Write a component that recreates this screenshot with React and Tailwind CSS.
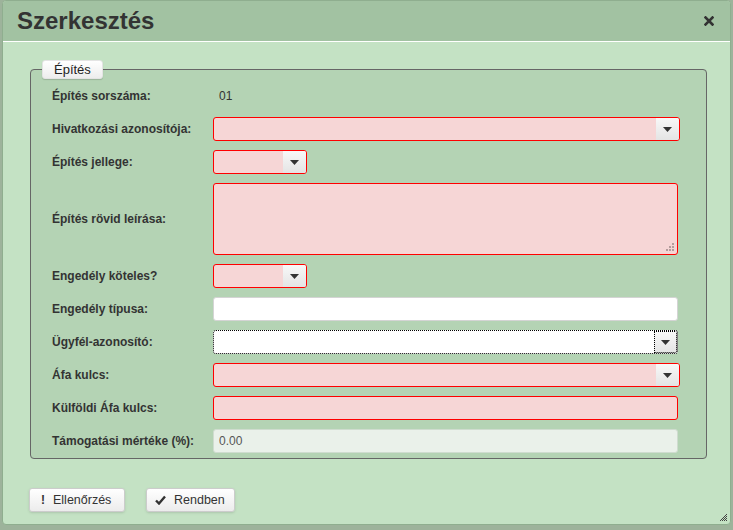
import React from "react";

const font = { fontFamily: '"Liberation Sans", Arial, sans-serif' };

const Arrow = () => (
  <svg width="9" height="5" viewBox="0 0 9 5" className="block">
    <path d="M0 0H9L4.5 5Z" fill="#333" />
  </svg>
);

const DropBtn = ({ dotted }) => (
  <span
    className={`flex h-full w-[23px] items-center justify-center rounded-r-[2px] bg-gradient-to-b from-[#f8f8f8] to-[#e4e4e4] ${dotted ? "outline outline-1 outline-dotted outline-black -outline-offset-1" : ""}`}
  >
    <Arrow />
  </span>
);

const Select = ({ w, tone }) => {
  const cls =
    tone === "error"
      ? "border-[#ff0000] bg-[#f6d6d6]"
      : "border-dotted border-black bg-white";
  return (
    <div className={`flex h-[24px] ${w} rounded-[3px] border ${cls}`}>
      <span className="flex-1" />
      <DropBtn dotted={tone !== "error"} />
    </div>
  );
};

const Input = ({ tone, value }) => {
  const cls =
    tone === "error"
      ? "border-[#ff0000] bg-[#f6d6d6]"
      : tone === "readonly"
      ? "border-[#cfdccf] bg-[#eaf1ea] text-[#555]"
      : "border-[#d4d4d4] bg-white";
  return (
    <div className={`flex h-[24px] w-[465px] items-center rounded-[3px] border px-[5px] text-[12px] ${cls}`}>
      {value}
    </div>
  );
};

const Row = ({ label, children, tall }) => (
  <div className={`flex items-center ${tall ? "h-[72px]" : "h-[24px]"}`}>
    <span className="w-[161px] shrink-0 text-[12px] font-bold text-[#333]">{label}</span>
    {children}
  </div>
);

const Grip = ({ color = "#b49c9c" }) => (
  <svg width="10" height="10" viewBox="0 0 10 10">
    {[
      [8, 2],
      [5, 5], [8, 5],
      [2, 8], [5, 8], [8, 8],
    ].map(([x, y], i) => (
      <rect key={i} x={x - 1} y={y - 1} width="2" height="2" fill={color} />
    ))}
  </svg>
);

export default function App() {
  return (
    <div className="h-[530px] w-[733px] overflow-hidden bg-[#9db39b]" style={font}>
      <div className="ml-[2px] flex h-[525px] w-[729px] flex-col overflow-hidden rounded-[4px] border border-[#8fae8f] bg-[#c4e2c4]">
        <div className="flex h-[41px] shrink-0 items-center justify-between border-b border-white bg-[#a2c2a2] pl-[14px] pr-[16px]">
          <h1 className="text-[24px] font-bold leading-none text-[#333]">Szerkesztés</h1>
          <svg width="10" height="10" viewBox="0 0 10 10">
            <path d="M1.5 1.5L8.5 8.5M8.5 1.5L1.5 8.5" stroke="#333" strokeWidth="2.6" strokeLinecap="square" />
          </svg>
        </div>

        <div className="flex flex-1 flex-col px-[27px] pt-[18px]">
          <fieldset className="w-[677px] rounded-[4px] border border-[#666] bg-[#b4d3b4] pb-[5px] pl-[11px] pr-[10px]">
            <legend className="h-[19px] rounded-[3px] border border-[#e4e4e4] bg-gradient-to-b from-white to-[#ededed] px-[11px] text-[13px] leading-[17px] text-[#222] shadow-[0_1px_1px_rgba(0,0,0,0.15)]">
              Építés
            </legend>
            <div className="flex flex-col gap-[9px] pl-[10px] pt-[5px]">
              <Row label="Építés sorszáma:">
                <span className="pl-[6px] text-[12px] text-[#333]">01</span>
              </Row>
              <Row label="Hivatkozási azonosítója:">
                <Select w="w-[467px]" tone="error" />
              </Row>
              <Row label="Építés jellege:">
                <Select w="w-[94px]" tone="error" />
              </Row>
              <Row label="Építés rövid leírása:" tall>
                <div className="flex h-[72px] w-[465px] items-end justify-end rounded-[3px] border border-[#ff0000] bg-[#f6d6d6] p-[2px]">
                  <Grip />
                </div>
              </Row>
              <Row label="Engedély köteles?">
                <Select w="w-[94px]" tone="error" />
              </Row>
              <Row label="Engedély típusa:">
                <Input />
              </Row>
              <Row label="Ügyfél-azonosító:">
                <Select w="w-[465px]" tone="focus" />
              </Row>
              <Row label="Áfa kulcs:">
                <Select w="w-[467px]" tone="error" />
              </Row>
              <Row label="Külföldi Áfa kulcs:">
                <Input tone="error" />
              </Row>
              <Row label="Támogatási mértéke (%):">
                <Input tone="readonly" value="0.00" />
              </Row>
            </div>
          </fieldset>

          <div className="-ml-px mt-[29px] flex gap-[21px]">
            <button className="flex h-[24px] w-[96px] items-center gap-[8px] rounded-[3px] border border-[#ccc] bg-gradient-to-b from-white to-[#ececec] pl-[11px] text-[12.5px] text-[#333] shadow-sm">
              <span className="text-[12px] font-bold">!</span>
              Ellenőrzés
            </button>
            <button className="flex h-[24px] w-[89px] items-center gap-[8px] rounded-[3px] border border-[#ccc] bg-gradient-to-b from-white to-[#ececec] pl-[8px] text-[12.5px] text-[#333] shadow-sm">
              <svg width="11" height="10" viewBox="0 0 11 10">
                <path d="M1 5.5L4 8.5L10 1.5" fill="none" stroke="#333" strokeWidth="2.4" />
              </svg>
              Rendben
            </button>
          </div>
          <div className="mt-auto flex justify-end pb-[2px]">
            <span className="-mr-[25px]">
              <svg width="9" height="9" viewBox="0 0 9 9">
                <path d="M8 1L1 8M8 3L3 8M8 5L5 8M8 7L7 8" stroke="#444" strokeWidth="1" />
              </svg>
            </span>
          </div>
        </div>
      </div>
    </div>
  );
}
